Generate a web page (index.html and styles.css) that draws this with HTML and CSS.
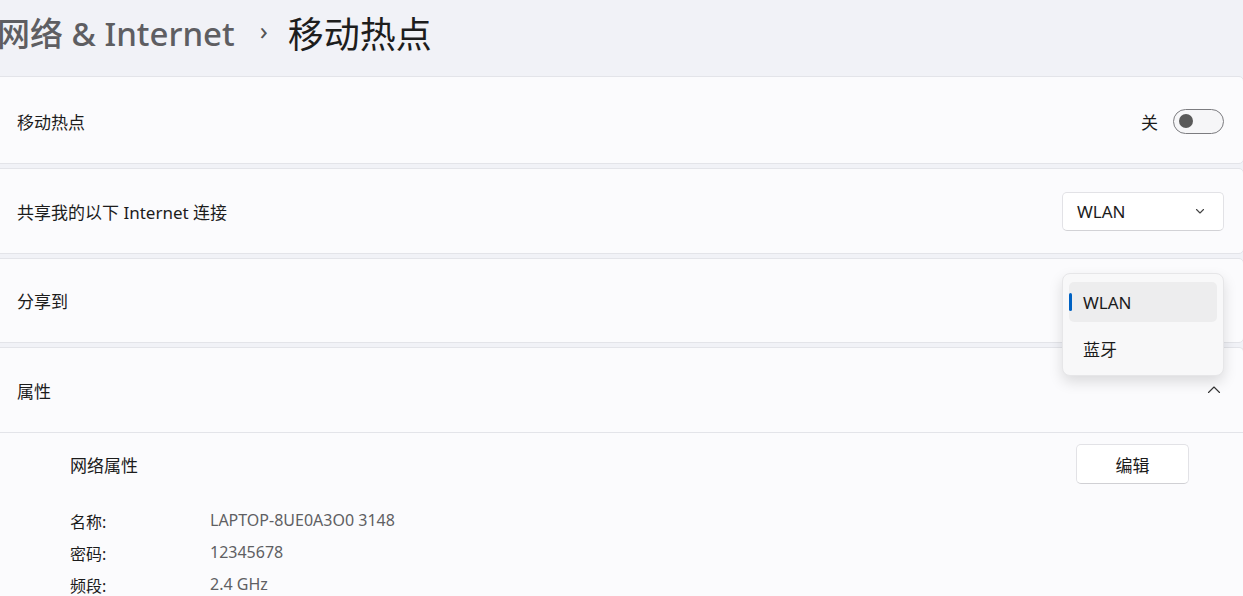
FILE: index.html
```html
<!DOCTYPE html>
<html lang="zh-CN">
<head>
  <meta charset="UTF-8" />
  <title>移动热点</title>
  <link rel="stylesheet" href="styles.css">
</head>
<body>
  <div class="page">
    <!-- breadcrumb title -->
    <header class="crumbs">
      <span class="crumb-parent">网络 &amp; Internet</span>
      <span class="crumb-sep">›</span>
      <span class="crumb-current">移动热点</span>
    </header>

    <section class="card card-hotspot">
      <span class="label">移动热点</span>
      <div class="toggle-wrap">
        <span class="state">关</span>
        <span class="toggle"><span class="knob"></span></span>
      </div>
    </section>

    <section class="card card-source">
      <span class="label">共享我的以下 Internet 连接</span>
      <div class="select">
        <span>WLAN</span>
        <svg width="12" height="12" viewBox="0 0 12 12"><path d="M2.5 4.5 L6 8 L9.5 4.5" fill="none" stroke="#444" stroke-width="1.1" stroke-linecap="round" stroke-linejoin="round"/></svg>
      </div>
    </section>

    <section class="card card-share">
      <span class="label">分享到</span>
      <!-- open dropdown menu -->
      <div class="menu">
        <div class="menu-item selected">WLAN</div>
        <div class="menu-item">蓝牙</div>
      </div>
    </section>

    <section class="card expander">
      <div class="expander-head">
        <span class="label">属性</span>
        <svg width="16" height="16" viewBox="0 0 16 16"><path d="M2.5 10.5 L8 5 L13.5 10.5" fill="none" stroke="#333" stroke-width="1.1" stroke-linecap="round" stroke-linejoin="round"/></svg>
      </div>
      <div class="expander-body">
        <div class="body-head">
          <span class="label">网络属性</span>
          <button class="btn">编辑</button>
        </div>
        <dl class="props">
          <dt>名称:</dt><dd>LAPTOP-8UE0A3O0 3148</dd>
          <dt>密码:</dt><dd>12345678</dd>
          <dt>频段:</dt><dd>2.4 GHz</dd>
        </dl>
      </div>
    </section>
  </div>
</body>
</html>
```

FILE: styles.css
```css
/* base */
html, body {
  margin: 0;
  padding: 0;
  height: 100%;
  overflow: hidden;
}
body {
  background: #f1f2f7;
  font-family: "Segoe UI", "Noto Sans", "Noto Sans CJK SC", sans-serif;
  color: #1b1b1b;
}
.page {
  display: flex;
  flex-direction: column;
  gap: 4px;
}

/* breadcrumb */
.crumbs {
  height: 76px;
  display: flex;
  align-items: center;
  margin-left: -3px;
  padding-bottom: 12px;
  box-sizing: border-box;
  margin-bottom: -4px;
}
.crumb-parent {
  font-size: 33px;
  color: #5e5e62;
  font-weight: 500;
}
.crumb-sep {
  font-size: 26px;
  color: #555;
  margin: 0 20px 0 25px;
  position: relative;
  top: -2px;
}
.crumb-current {
  font-size: 36px;
  color: #1d1d1d;
}

/* setting cards */
.card {
  position: relative;
  background: #fbfbfd;
  border: 1px solid #e3e4e9;
  border-radius: 5px;
  margin: 0 -1px 0 -6px;
  box-sizing: border-box;
  display: flex;
  align-items: center;
  justify-content: space-between;
  padding: 0 19px 0 22px;
}
.card-hotspot {
  height: 88px;
  padding-top: 2px;
}
.card-source {
  height: 86px;
}
.card-share {
  height: 85px;
}
.label {
  font-size: 17px;
  color: #1c1c1c;
}

/* toggle */
.toggle-wrap {
  display: flex;
  align-items: center;
  gap: 15px;
}
.state {
  font-size: 17px;
}
.toggle {
  width: 44px;
  height: 23px;
  border: 1px solid #7c7c80;
  border-radius: 13px;
  background: #f6f6f8;
  display: flex;
  align-items: center;
  padding-left: 5px;
  box-sizing: content-box;
}
.knob {
  width: 14px;
  height: 14px;
  border-radius: 50%;
  background: #595959;
}

/* combo box */
.select {
  width: 162px;
  height: 39px;
  box-sizing: border-box;
  background: #ffffff;
  border: 1px solid #e2e2e6;
  border-bottom-color: #d2d2d6;
  border-radius: 5px;
  display: flex;
  align-items: center;
  justify-content: space-between;
  padding: 0 17px 0 14px;
  font-size: 17px;
}

/* open menu */
.menu {
  position: absolute;
  right: 19px;
  top: 14px;
  width: 162px;
  height: 103px;
  box-sizing: border-box;
  background: #f8f8f9;
  border: 1px solid #e6e6e8;
  border-radius: 8px;
  box-shadow: 0 6px 14px rgba(0, 0, 0, 0.13);
  padding: 8px 6px;
  z-index: 5;
}
.menu-item {
  position: relative;
  height: 40px;
  display: flex;
  align-items: center;
  padding-left: 14px;
  font-size: 17px;
  border-radius: 5px;
  margin-bottom: 6px;
}
.menu-item.selected {
  background: #ededee;
}
.menu-item.selected::before {
  content: "";
  position: absolute;
  left: 0;
  top: 11px;
  width: 3px;
  height: 18px;
  border-radius: 2px;
  background: #0062c3;
}

/* expander */
.expander {
  display: block;
  padding: 0;
  border-bottom: none;
  border-radius: 5px 5px 0 0;
}
.expander-head {
  height: 84px;
  display: flex;
  align-items: center;
  justify-content: space-between;
  padding: 0 21px 0 22px;
  border-bottom: 1px solid #e3e4e9;
}
.expander-body {
  padding: 11px 54px 0 75px;
  height: 170px;
}
.body-head {
  display: flex;
  align-items: center;
  justify-content: space-between;
}
.btn {
  width: 113px;
  height: 40px;
  background: #ffffff;
  border: 1px solid #e2e2e6;
  border-bottom-color: #d0d0d4;
  border-radius: 5px;
  font-family: inherit;
  font-size: 17px;
  color: #1b1b1b;
}
.props {
  display: grid;
  grid-template-columns: 140px 1fr;
  row-gap: 8px;
  margin: 25px 0 0;
  font-size: 16px;
}
.props dt {
  color: #1c1c1c;
}
.props dd {
  margin: 0;
  color: #5f5f63;
}
```
